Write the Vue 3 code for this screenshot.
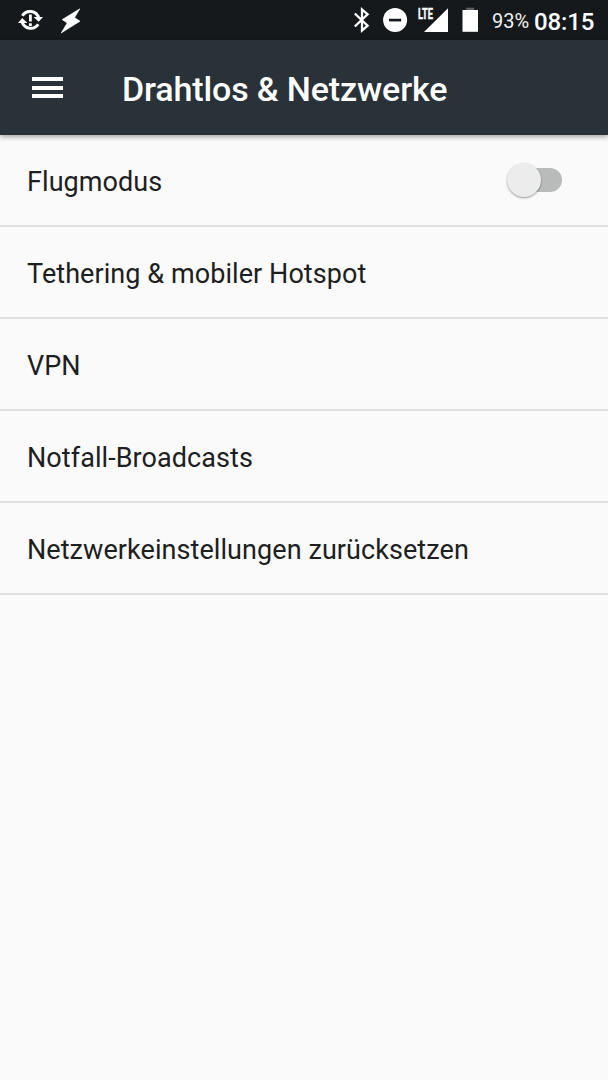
<template>
  <div class="screen">
    <header class="status">
      <div class="status-group">
        <svg class="icon-sync" width="26" height="24" viewBox="18 8 26 24">
          <path d="M22.4 15.8A9 9 0 0 1 38.7 18M38.2 24.2A9 9 0 0 1 22.1 22" fill="none" stroke="#fff" stroke-width="3" />
          <path d="M33.6 17H43L38.6 21.8ZM18 23H27.4L22.2 18Z" fill="#fff" />
          <path d="M30.4 14.6V21.6M30.4 23.3V25.9" stroke="#fff" stroke-width="2.8" />
        </svg>
        <svg class="icon-bolt" width="20" height="26" viewBox="61 8 20 26">
          <path d="M79.8 8.8L62.2 19.6L67.2 23L61.2 33L80 21.2L74.6 17.6Z" fill="#fff" stroke="#fff" stroke-width="0.6" />
        </svg>
      </div>
      <div class="status-group">
        <svg class="icon-bluetooth" width="18" height="26" viewBox="353 7 18 26">
          <path d="M354.8 13.5L367.6 25.7L362 30.5V9.5L367.6 14.3L354.8 26.5" fill="none" stroke="#fff" stroke-width="2.3" />
        </svg>
        <svg class="icon-dnd" width="26" height="26" viewBox="382 7 26 26">
          <circle cx="395.1" cy="20.1" r="12" fill="#fff" />
          <path d="M389 20.1H401.2" stroke="#15191c" stroke-width="2.7" />
        </svg>
        <div class="signal">
          <svg width="32" height="26" viewBox="417 7 32 26">
            <path d="M448 8.2V32H424Z" fill="#fff" />
            <path d="M417 7H434.2V20.4H417Z" fill="#15191c" />
          </svg>
          <span class="lte">LTE</span>
        </div>
        <svg class="icon-battery" width="17" height="26" viewBox="462 7 17 26">
          <path d="M466.2 7.7H474.2V11H466.2Z" fill="#5b5e60" />
          <path d="M462.5 10H478V31.8H462.5Z" fill="#fff" />
        </svg>
        <span class="percent">93%</span>
        <span class="clock">08:15</span>
      </div>
    </header>

    <div class="toolbar">
      <button class="menu" aria-label="Menü">
        <span></span>
        <span></span>
        <span></span>
      </button>
      <h1>Drahtlos &amp; Netzwerke</h1>
    </div>

    <ul class="list">
      <li v-for="item in items" :key="item.title" class="row">
        <span>{{ item.title }}</span>
        <button
          v-if="item.toggle"
          class="switch"
          :class="{ on: airplane }"
          :aria-label="item.title"
          @click="airplane = !airplane"
        >
          <i class="thumb"></i>
        </button>
      </li>
    </ul>
  </div>
</template>

<script setup>
import { ref } from "vue";

const airplane = ref(false);

const items = [
  { title: "Flugmodus", toggle: true },
  { title: "Tethering & mobiler Hotspot" },
  { title: "VPN" },
  { title: "Notfall-Broadcasts" },
  { title: "Netzwerkeinstellungen zurücksetzen" },
];
</script>

<style>
body {
  margin: 0;
  background: #fafafa;
}
</style>

<style scoped>
.screen {
  min-height: 100vh;
  background: #fafafa;
  font-family: Roboto, sans-serif;
  color: #1d2021;
}

.status {
  display: flex;
  justify-content: space-between;
  box-sizing: border-box;
  height: 40px;
  padding: 0 14px 0 18px;
  background: #15191c;
  color: #fff;
}

.status-group {
  display: flex;
  align-items: center;
  white-space: nowrap;
}

.status svg {
  display: block;
  flex: none;
}

.icon-bolt {
  margin: 1px 0 0 17px;
}

.icon-dnd {
  margin-left: 11px;
}

.signal {
  position: relative;
  margin-left: 9px;
}

.lte {
  position: absolute;
  left: 1px;
  top: 0;
  font-size: 14px;
  line-height: 14px;
  font-weight: 700;
  transform: scaleX(0.66);
  transform-origin: 0 0;
  -webkit-text-stroke: 0.4px #fff;
}

.icon-battery {
  margin-left: 13px;
}

.percent {
  width: 37px;
  margin-left: 13px;
  padding-top: 2px;
  font-size: 20px;
  color: #f0f0f0;
}

.clock {
  width: 60px;
  margin-left: 5px;
  padding-top: 3px;
  font-size: 24px;
  font-weight: 500;
  letter-spacing: -0.1px;
}

.toolbar {
  position: relative;
  display: flex;
  align-items: center;
  height: 95px;
  padding-left: 32px;
  background: #283238;
  box-shadow: 0 2px 5px rgba(0, 0, 0, 0.35);
}

.menu {
  display: flex;
  flex-direction: column;
  gap: 4.5px;
  width: 31px;
  padding: 0;
  border: 0;
  background: none;
}

.menu span {
  height: 4px;
  background: #fff;
}

h1 {
  margin: 3px 0 0 59px;
  color: #fff;
  font-size: 34px;
  line-height: 40px;
  font-weight: 500;
  letter-spacing: -0.14px;
  white-space: nowrap;
}

.list {
  margin: 0;
  padding: 0;
  list-style: none;
}

.row {
  display: flex;
  align-items: center;
  justify-content: space-between;
  box-sizing: border-box;
  height: 92px;
  padding: 4px 46px 0 27px;
  border-bottom: 2px solid #e0e0e0;
  font-size: 27px;
  letter-spacing: 0.07px;
}

.switch {
  position: relative;
  width: 52px;
  height: 24px;
  margin-top: -4px;
  padding: 0;
  border: 0;
  border-radius: 12px;
  background: #b9bbbb;
}

.thumb {
  position: absolute;
  left: -3px;
  top: -5px;
  width: 34px;
  height: 34px;
  border-radius: 50%;
  background: #ececec;
  box-shadow: 0 1px 2px rgba(0, 0, 0, 0.4);
}

.switch.on .thumb {
  left: 22px;
  background: #009688;
}
</style>
